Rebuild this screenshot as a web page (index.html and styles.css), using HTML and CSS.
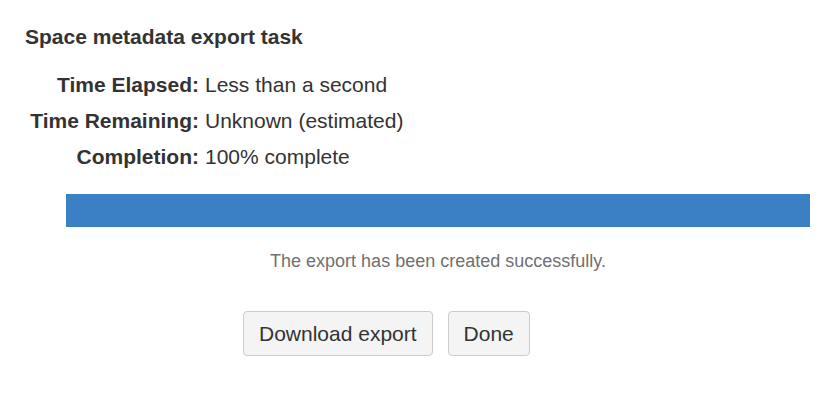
FILE: index.html
```html
<!DOCTYPE html>
<html lang="en">
<head>
    <meta charset="UTF-8">
    <meta name="viewport" content="width=device-width, initial-scale=1.0">
    <title>Space metadata export task</title>
    <link rel="stylesheet" href="styles.css">
</head>
<body>
    <div class="task">
        <h2 class="task-title">Space metadata export task</h2>
        <div class="task-details">
            <div class="detail-label">Time Elapsed:</div>
            <div class="detail-value">Less than a second</div>
            <div class="detail-label">Time Remaining:</div>
            <div class="detail-value">Unknown (estimated)</div>
            <div class="detail-label">Completion:</div>
            <div class="detail-value">100% complete</div>
        </div>
        <div class="progress">
            <div class="progress-bar">
                <div class="progress-fill" style="width: 100%"></div>
            </div>
            <p class="progress-message">The export has been created successfully.</p>
        </div>
        <div class="task-actions">
            <button type="button" class="btn">Download export</button>
            <button type="button" class="btn">Done</button>
        </div>
    </div>
</body>
</html>
```

FILE: styles.css
```css
body {
    margin: 0;
    font-family: "Liberation Sans", Arial, sans-serif;
    color: #333;
    background: #fff;
}
.task {
    padding: 22px 0 0 25px;
}
.task-title {
    margin: 0;
    font-size: 21px;
    font-weight: bold;
    line-height: 30px;
}
.task-details {
    display: grid;
    grid-template-columns: 174px auto;
    column-gap: 6px;
    margin-top: 15px;
    font-size: 21px;
    line-height: 36px;
}
.detail-label {
    text-align: right;
    font-weight: bold;
}
.progress {
    margin: 19px 0 0 41px;
    width: 744px;
}
.progress-bar {
    height: 33px;
    background: #fff;
}
.progress-fill {
    height: 100%;
    background-color: #3b7fc4;
}
.progress-message {
    margin: 21px 0 0;
    text-align: center;
    font-size: 18px;
    line-height: 27px;
    color: #707070;
}
.task-actions {
    display: flex;
    gap: 15px;
    margin: 36px 0 0 218px;
}
.btn {
    height: 45px;
    padding: 0 15px;
    font-family: inherit;
    font-size: 21px;
    color: #333;
    background-color: #f4f4f4;
    border: 1px solid #ccc;
    border-radius: 4px;
    cursor: pointer;
}
.btn:hover {
    background-color: #e9e9e9;
}
```
